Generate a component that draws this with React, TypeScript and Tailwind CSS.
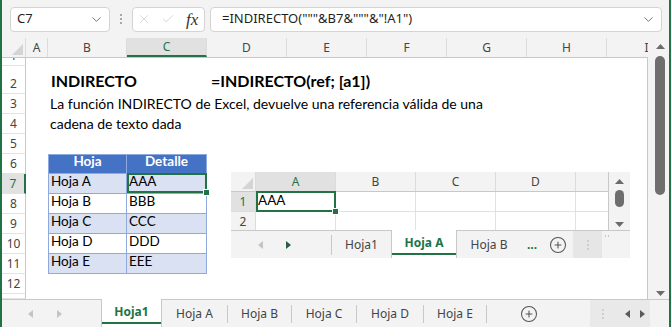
import { ChevronDown, X, Check, CirclePlus } from 'lucide-react';

type Dir = 'l' | 'r' | 'u' | 'd';

const Tri = ({ dir, color, w, h }: { dir: Dir; color: string; w: number; h: number }) => {
  const d =
    dir === 'l'
      ? `M${w} 0L0 ${h / 2}L${w} ${h}Z`
      : dir === 'r'
        ? `M0 0L${w} ${h / 2}L0 ${h}Z`
        : dir === 'u'
          ? `M0 ${h}L${w / 2} 0L${w} ${h}Z`
          : `M0 0L${w / 2} ${h}L${w} 0Z`;
  return (
    <svg width={w} height={h} viewBox={`0 0 ${w} ${h}`} className="shrink-0">
      <path d={d} fill={color} />
    </svg>
  );
};

const Corner = () => (
  <svg width="11" height="11" viewBox="0 0 11 11" className="shrink-0">
    <path d="M11 0V11H0Z" fill="#d4d4d4" />
  </svg>
);

const VDots = ({ dot }: { dot: string }) => (
  <div className="flex flex-col gap-[2px]">
    <span className={`h-[2px] w-[2px] rounded-full ${dot}`} />
    <span className={`h-[2px] w-[2px] rounded-full ${dot}`} />
    <span className={`h-[2px] w-[2px] rounded-full ${dot}`} />
  </div>
);

const cols = [
  { l: 'A', w: 'w-[22px]' },
  { l: 'B', w: 'w-[79px]' },
  { l: 'C', w: 'w-[80px]' },
  { l: 'D', w: 'w-[80px]' },
  { l: 'E', w: 'w-[80px]' },
  { l: 'F', w: 'w-[80px]' },
  { l: 'G', w: 'w-[80px]' },
  { l: 'H', w: 'w-[80px]' },
  { l: 'I', w: 'w-[80px]' },
];

const table = [
  ['Hoja', 'Detalle'],
  ['Hoja A', 'AAA'],
  ['Hoja B', 'BBB'],
  ['Hoja C', 'CCC'],
  ['Hoja D', 'DDD'],
  ['Hoja E', 'EEE'],
];

const rowNums = [1, 2, 3, 4, 5, 6, 7, 8, 9, 10, 11, 12, 13];

const rowHeight = (n: number) => (n === 1 ? 'h-[8px]' : n === 2 ? 'h-[28px]' : n === 13 ? 'h-[5px]' : 'h-[20px]');

const FormulaBar = () => (
  <div className="flex h-[38px] shrink-0 items-center bg-[#f3f3f3] pl-[8px] pr-[7px]">
    <div className="flex h-[25px] w-[100px] items-center justify-between rounded-[4px] border border-[#d4d4d4] bg-white pl-[6px] pr-[5px]">
      <span className="text-[13px] text-[#1f1f1f]">C7</span>
      <ChevronDown size={15} strokeWidth={1.3} className="text-[#555]" />
    </div>
    <div className="mx-[10px]">
      <VDots dot="bg-[#8f8f8f]" />
    </div>
    <div className="flex h-[25px] w-[73px] items-center rounded-[4px] border border-[#d4d4d4] bg-white pl-[4px]">
      <X size={14} strokeWidth={1.1} className="text-[#c2c2c2]" />
      <Check size={14} strokeWidth={1.1} className="ml-[10px] text-[#c2c2c2]" />
      <span className="ml-[11px] font-['Liberation_Serif',serif] text-[17px] italic leading-none text-[#333]">fx</span>
    </div>
    <div className="ml-[5px] flex h-[25px] flex-1 items-center justify-between rounded-[4px] border border-[#d4d4d4] bg-white pl-[11px] pr-[5px]">
      <span className="text-[13px] text-[#1f1f1f]">{'=INDIRECTO("""&B7&"""&"!A1")'}</span>
      <ChevronDown size={15} strokeWidth={1.3} className="text-[#555]" />
    </div>
  </div>
);

const cellClass = (n: number, ci: number) => {
  if (n >= 6 && n <= 11 && (ci === 1 || ci === 2)) {
    const edge = `${ci === 1 ? 'border-l' : ''} ${n === 6 ? 'border-t' : ''}`;
    if (n === 6)
      return `flex items-end justify-center border-r border-b border-[#8ea9db] bg-[#4472c4] pb-[3px] font-bold text-white ${edge}`;
    return `flex items-end border-r border-b border-[#8ea9db] pb-[3px] pl-[2px] text-black ${n % 2 === 1 ? 'bg-[#d9e1f2]' : 'bg-white'} ${edge}`;
  }
  return 'flex items-end text-black';
};

const cellBody = (n: number, ci: number) => {
  if (n === 2 && ci === 1)
    return <span className="whitespace-nowrap pb-[3px] pl-[3px] text-[16px] font-bold leading-[20px]">INDIRECTO</span>;
  if (n === 2 && ci === 3)
    return (
      <span className="whitespace-nowrap pb-[3px] pl-[4px] text-[16px] font-bold leading-[20px]">=INDIRECTO(ref; [a1])</span>
    );
  if (n === 3 && ci === 1)
    return (
      <span className="whitespace-nowrap pb-[2px] pl-[2px] text-[14px] leading-[17px]">
        La función INDIRECTO de Excel, devuelve una referencia válida de una
      </span>
    );
  if (n === 4 && ci === 1)
    return <span className="whitespace-nowrap pb-[2px] pl-[2px] text-[14px] leading-[17px]">cadena de texto dada</span>;
  if (n >= 6 && n <= 11 && (ci === 1 || ci === 2))
    return (
      <>
        <span className="whitespace-nowrap text-[13.5px] leading-[17px]">{table[n - 6][ci - 1]}</span>
        {n === 7 && ci === 2 && (
          <>
            <div className="absolute -top-[1px] bottom-0 left-0 -right-[1px] z-10 border-2 border-[#217346]" />
            <div className="absolute -bottom-[2px] -right-[3px] z-10 h-[5px] w-[5px] bg-[#217346] outline outline-1 outline-white" />
          </>
        )}
      </>
    );
  return null;
};

const RowHead = ({ n }: { n: number }) => {
  const sel = n === 7;
  const base = `flex w-[24px] shrink-0 justify-center overflow-hidden border-b border-r border-b-[#e3e3e3] font-['Noto_Sans',sans-serif] text-[12px] leading-[14px] ${
    sel ? 'border-r-2 border-r-[#217346] bg-[#e1e1e1] text-[#217346]' : 'border-r-[#c8c8c8] text-[#444]'
  }`;
  if (n === 1)
    return (
      <div className={base}>
        <div className="-mt-[12px] flex h-[20px] shrink-0 items-center">1</div>
      </div>
    );
  if (n === 2) return <div className={`${base} items-end pb-[2px]`}>2</div>;
  if (n === 13) return <div className={base} />;
  return <div className={`${base} items-center`}>{n}</div>;
};

const MiniSheet = () => (
  <div className="absolute left-[229px] top-[134px] z-20 flex h-[86px] w-[399px] flex-col bg-[#f3f3f3] font-['Noto_Sans',sans-serif]">
    <div className="flex h-[58px]">
      <div className="w-[377px] overflow-hidden">
        <div className="flex h-[20px] border-b border-[#c8c8c8] bg-[#f3f3f3]">
          <div className="flex w-[25px] shrink-0 items-end justify-end border-r border-[#dcdcdc] pb-[2px] pr-[2px]">
            <Corner />
          </div>
          {['A', 'B', 'C', 'D', ''].map((l, i) => (
            <div
              key={i}
              className={`flex w-[80px] shrink-0 items-center justify-center border-r border-[#dcdcdc] text-[12px] ${
                i === 0 ? 'bg-[#e1e1e1] text-[#217346]' : 'text-[#444]'
              }`}
            >
              {l}
            </div>
          ))}
        </div>
        <div className="flex h-[20px]">
          <div className="flex w-[25px] shrink-0 items-center justify-center border-b border-r border-[#dcdcdc] bg-[#e1e1e1] text-[12px] text-[#217346]">
            1
          </div>
          <div className="relative flex w-[80px] shrink-0 items-end border-b border-r border-[#e1e1e1] bg-white pb-[2px] pl-[2px] font-['Lato',sans-serif] text-[13.5px] leading-[17px] text-black">
            AAA
            <div className="absolute -top-[1px] -bottom-[1px] left-0 -right-[1px] border-2 border-[#217346]" />
            <div className="absolute -bottom-[3px] -right-[3px] h-[5px] w-[5px] bg-[#217346] outline outline-1 outline-white" />
          </div>
          {[0, 1, 2, 3].map((i) => (
            <div key={i} className="w-[80px] shrink-0 border-b border-r border-[#e1e1e1] bg-white" />
          ))}
        </div>
        <div className="flex h-[18px]">
          <div className="flex w-[25px] shrink-0 items-start justify-center border-r border-[#dcdcdc] pt-[1px] text-[12px] text-[#444]">
            2
          </div>
          {[0, 1, 2, 3, 4].map((i) => (
            <div key={i} className="w-[80px] shrink-0 border-r border-[#e1e1e1] bg-white" />
          ))}
        </div>
      </div>
      <div className="flex w-[22px] flex-col items-center border-l border-[#c8c8c8] pt-[7px]">
        <Tri dir="u" color="#6b6b6b" w={9} h={5} />
        <div className="mt-[6px] h-[17px] w-[9px] rounded-full bg-[#6e6e6e]" />
        <div className="mt-[15px]">
          <Tri dir="d" color="#6b6b6b" w={9} h={5} />
        </div>
      </div>
    </div>
    <div className="flex h-[28px] border-t border-[#c8c8c8] text-[12px] text-[#444]">
      <div className="flex w-[101px] items-center pl-[27px]">
        <Tri dir="l" color="#c4c4c4" w={5} h={8} />
        <div className="ml-[23px]">
          <Tri dir="r" color="#2b5e40" w={5} h={8} />
        </div>
        <div className="flex-1" />
        <span className="h-[20px] w-px bg-[#c8c8c8]" />
      </div>
      <div className="flex w-[59px] items-center justify-center">Hoja1</div>
      <div className="-mt-px flex w-[66px] flex-col border-x border-[#c8c8c8] bg-white">
        <div className="flex flex-1 items-center justify-center pt-[2px] font-bold text-[#217346]">Hoja A</div>
        <div className="mb-[3px] h-[2px] bg-[#217346]" />
      </div>
      <div className="flex w-[64px] items-center justify-center">Hoja B</div>
      <div className="flex w-[22px] items-center justify-center font-bold text-[#217346]">...</div>
      <div className="flex w-[30px] items-center justify-center">
        <CirclePlus size={18} strokeWidth={1.4} className="text-[#555]" />
      </div>
      <div className="flex w-[29px] items-center justify-center bg-[#e6e6e6]">
        <VDots dot="bg-[#c4c4c4]" />
      </div>
      <div className="flex flex-1 items-start gap-[2px] pl-[3px] pt-[4px]">
        <span className="h-[2px] w-px bg-[#c4c4c4]" />
        <span className="h-[2px] w-px bg-[#c4c4c4]" />
      </div>
    </div>
  </div>
);

const Sheet = () => (
  <div className="relative w-[646px] shrink-0 overflow-hidden">
    <div className="flex h-[20px] border-b border-[#c8c8c8] bg-[#f3f3f3] font-['Noto_Sans',sans-serif]">
      <div className="flex w-[24px] shrink-0 items-end justify-end border-r border-[#dcdcdc] pb-[2px] pr-[2px]">
        <Corner />
      </div>
      {cols.map((c, i) => (
        <div
          key={c.l}
          className={`flex shrink-0 items-center justify-center border-r border-[#dcdcdc] text-[12px] ${c.w} ${
            i === 2 ? 'border-b-2 border-b-[#217346] bg-[#e1e1e1] text-[#217346]' : 'text-[#444]'
          }`}
        >
          {c.l}
        </div>
      ))}
    </div>
    <div className="h-[241px] w-[646px] overflow-hidden border-r border-[#c8c8c8] font-['Lato',sans-serif]">
      {rowNums.map((n) => (
        <div key={n} className={`flex shrink-0 ${rowHeight(n)}`}>
          <RowHead n={n} />
          {cols.map((c, ci) => (
            <div key={c.l} className={`relative shrink-0 ${c.w} ${cellClass(n, ci)}`}>
              {cellBody(n, ci)}
            </div>
          ))}
        </div>
      ))}
    </div>
    <MiniSheet />
  </div>
);

const VScroll = () => (
  <div className="flex w-[21px] shrink-0 flex-col items-center bg-[#f3f3f3] pb-[3px] pl-[3px] pt-[6px]">
    <Tri dir="u" color="#6b6b6b" w={9} h={5} />
    <div className="mt-[7px] h-[139px] w-[10px] rounded-full bg-[#6e6e6e]" />
    <div className="flex-1" />
    <Tri dir="d" color="#6b6b6b" w={9} h={5} />
  </div>
);

const tabs = [
  { t: 'Hoja A', w: 'w-[66px]' },
  { t: 'Hoja B', w: 'w-[64px]' },
  { t: 'Hoja C', w: 'w-[65px]' },
  { t: 'Hoja D', w: 'w-[67px]' },
  { t: 'Hoja E', w: 'w-[63px]' },
];

const SheetTabs = () => (
  <div className="flex h-[28px] shrink-0 border-t border-[#c8c8c8] bg-[#f3f3f3] text-[12px] text-[#444]">
    <div className="flex w-[99px] items-center pl-[26px]">
      <Tri dir="l" color="#c4c4c4" w={5} h={8} />
      <div className="ml-[24px]">
        <Tri dir="r" color="#c4c4c4" w={5} h={8} />
      </div>
    </div>
    <div className="-mt-px flex w-[61px] flex-col border-x border-[#c8c8c8] bg-white">
      <div className="flex flex-1 items-center justify-center pt-[3px] font-bold text-[#217346]">Hoja1</div>
      <div className="mb-[3px] h-[2px] bg-[#217346]" />
    </div>
    {tabs.map((t) => (
      <div key={t.t} className={`flex items-center ${t.w}`}>
        <span className="flex-1 pt-[1px] text-center">{t.t}</span>
        <span className="h-[18px] w-px bg-[#c8c8c8]" />
      </div>
    ))}
    <div className="w-[33px]" />
    <div className="flex w-[18px] items-center justify-center">
      <CirclePlus size={18} strokeWidth={1.4} className="text-[#555]" />
    </div>
    <div className="w-[52px]" />
    <div className="flex w-[60px] items-center bg-[#e9e9e9] pl-[12px]">
      <VDots dot="bg-[#c4c4c4]" />
      <div className="ml-[21px]">
        <Tri dir="l" color="#5a5a5a" w={5} h={8} />
      </div>
      <div className="ml-[10px]">
        <Tri dir="r" color="#5a5a5a" w={5} h={8} />
      </div>
    </div>
    <div className="flex-1" />
  </div>
);

export default function App() {
  return (
    <div className="flex h-[327px] w-[671px] flex-col overflow-hidden border-x-2 border-[#217346] bg-white font-['Noto_Sans',sans-serif] text-[#262626]">
      <FormulaBar />
      <div className="flex h-[261px] shrink-0">
        <Sheet />
        <VScroll />
      </div>
      <SheetTabs />
    </div>
  );
}
